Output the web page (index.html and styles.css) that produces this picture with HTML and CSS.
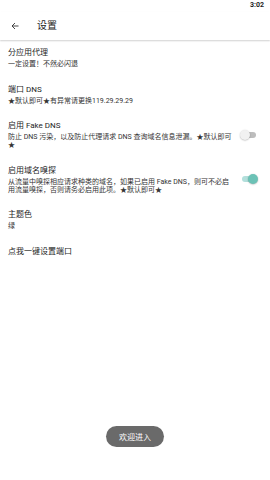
FILE: index.html
```html
<!DOCTYPE html>
<html lang="zh-CN">
<head>
<meta charset="utf-8">
<link rel="stylesheet" href="styles.css">
</head>
<body>
<div class="screen">
  <div class="statusbar"><span class="time">3:02</span></div>
  <div class="toolbar">
    <svg class="back" width="8" height="8" viewBox="0 0 8 8"><path d="M7.5 4H1M4 1L1 4L4 7" fill="none" stroke="#333" stroke-width="0.9"/></svg>
    <span class="title">设置</span>
  </div>
  <div class="list">
    <div class="item">
      <div class="text">
        <div class="t">分应用代理</div>
        <div class="s">一定设置！不然必闪退</div>
      </div>
    </div>
    <div class="item">
      <div class="text">
        <div class="t">端口 DNS</div>
        <div class="s">★默认即可★有异常请更换119.29.29.29</div>
      </div>
    </div>
    <div class="item">
      <div class="text">
        <div class="t">启用 Fake DNS</div>
        <div class="s">防止 DNS 污染，以及防止代理请求 DNS 查询域名信息泄漏。★默认即可★</div>
      </div>
      <div class="switch"><span class="track"></span><span class="thumb"></span></div>
    </div>
    <div class="item">
      <div class="text">
        <div class="t">启用域名嗅探</div>
        <div class="s">从流量中嗅探相应请求种类的域名，如果已启用 Fake DNS，则可不必启用流量嗅探，否则请务必启用此项。★默认即可★</div>
      </div>
      <div class="switch on"><span class="track"></span><span class="thumb"></span></div>
    </div>
    <div class="item">
      <div class="text">
        <div class="t">主题色</div>
        <div class="s">绿</div>
      </div>
    </div>
    <div class="item">
      <div class="text">
        <div class="t">点我一键设置端口</div>
      </div>
    </div>
  </div>
  <div class="toast">欢迎进入</div>
</div>
</body>
</html>
```

FILE: styles.css
```css
* { box-sizing: border-box; }
html, body { margin: 0; padding: 0; background: #fff; }
body {
  font-family: Roboto, "Noto Sans CJK SC", sans-serif;
  color: #222;
}
.screen { width: 270px; height: 480px; position: relative; overflow: hidden; background: #fff; }
.statusbar { height: 12px; display: flex; justify-content: flex-end; align-items: center; padding-right: 6px; }
.time {
  font-size: 7px; font-weight: 700; color: #222; line-height: 8px;
  text-shadow: 0 0 1px #fff, 0 0 1px #fff;
  position: relative; top: -1px;
}
.toolbar {
  height: 28px; display: flex; align-items: center; padding-left: 11px;
  box-shadow: 0 1px 1.5px rgba(0,0,0,0.18);
  position: relative; z-index: 1;
}
.back { display: block; }
.title { font-size: 10px; margin-left: 18px; color: #222; line-height: 12px; }
.list { display: flex; flex-direction: column; }
.item {
  display: flex; align-items: center;
  padding: 7px 8px 8.5px 8px;
}
.text { width: 227px; }
.t { font-size: 8px; line-height: 12px; color: #1e1e1e; }
.s { font-size: 7px; line-height: 8px; margin-top: 1px; color: #333; line-break: anywhere; }
.switch { position: relative; width: 18px; height: 10px; margin-left: 5px; }
.track {
  position: absolute; left: 2px; top: 2px; width: 14px; height: 6px; border-radius: 3px;
  background: #bdbdbd;
}
.thumb {
  position: absolute; left: 0; top: 0; width: 10px; height: 10px; border-radius: 50%;
  background: #f1f1f1; box-shadow: 0 0.5px 1.5px rgba(0,0,0,0.3);
}
.switch.on .track { background: #b2dfdb; }
.switch.on .thumb { left: 8px; background: #6cc2b6; }
.toast {
  position: absolute; left: 50%; bottom: 33px; transform: translateX(-50%);
  height: 21px; padding: 0 13px; border-radius: 11px;
  background: #6a6a6a; color: #fff; font-size: 8px;
  display: flex; align-items: center; white-space: nowrap;
}
```
